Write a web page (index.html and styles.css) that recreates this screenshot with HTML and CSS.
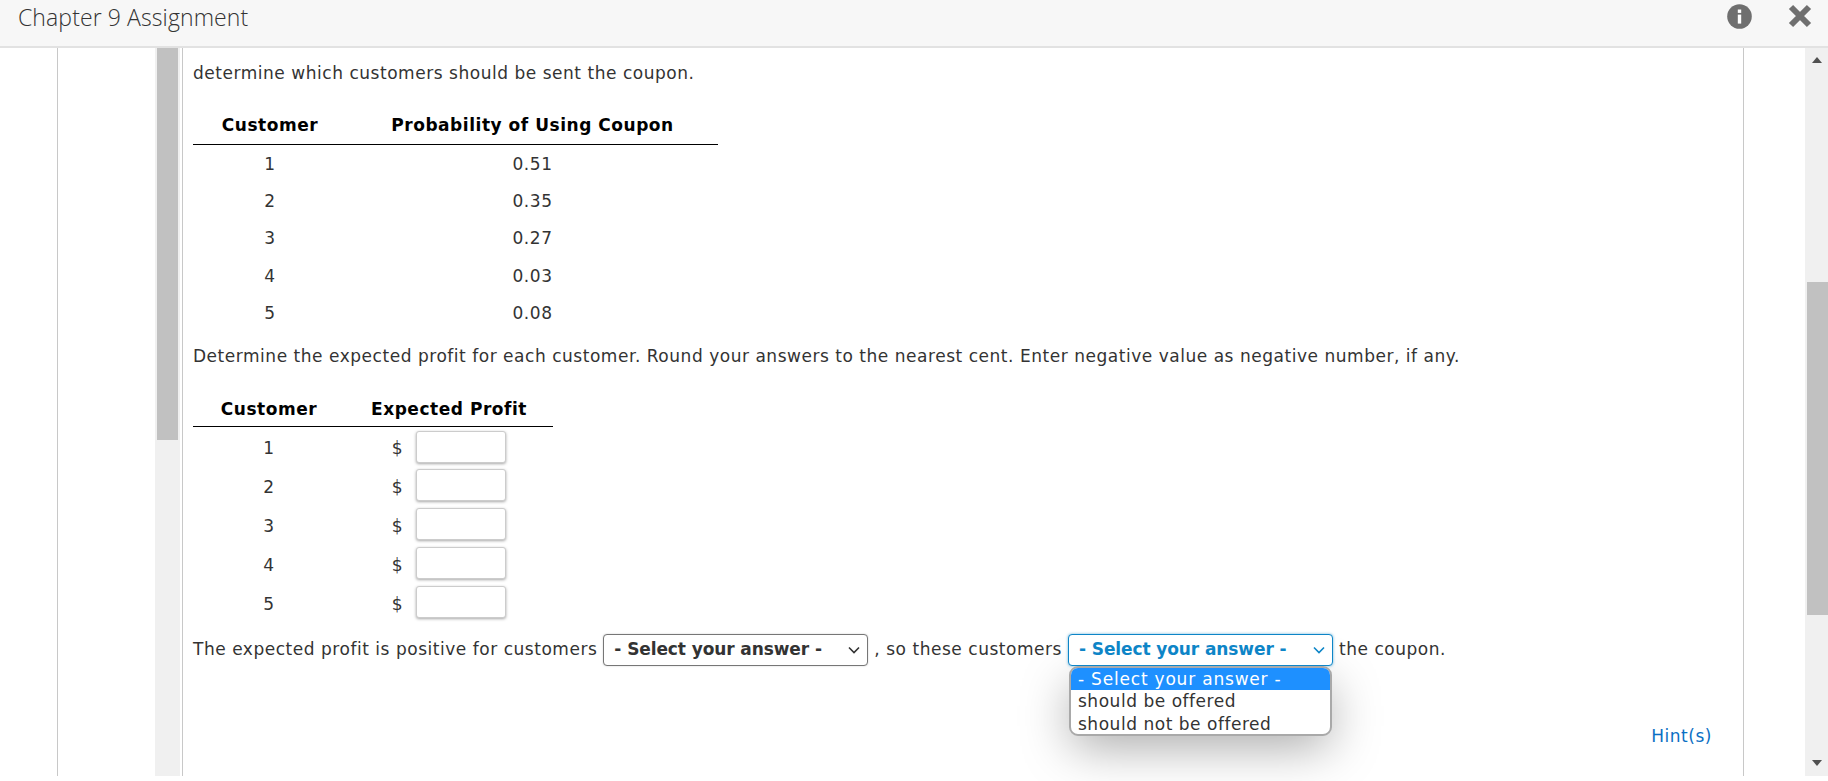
FILE: index.html
```html
<!DOCTYPE html>
<html lang="en">
<head>
    <meta charset="UTF-8">
    <meta name="viewport" content="width=device-width, initial-scale=1.0">
    <title>Chapter 9 Assignment</title>
    <link rel="stylesheet" href="styles.css">
</head>
<body>

    <div class="header">
        <div class="header-title">Chapter 9 Assignment</div>
        <div class="header-icons">
            <svg class="icon-info" width="25" height="25" viewBox="0 0 25 25">
                <circle cx="12.5" cy="12.5" r="12.3" fill="#6f6f6f"/>
                <rect x="10.8" y="5.5" width="3.4" height="3.4" fill="#fff"/>
                <rect x="10.8" y="10.6" width="3.4" height="9" fill="#fff"/>
            </svg>
            <svg class="icon-close" width="24" height="24" viewBox="0 0 24 24">
                <path d="M3 3l18 18M21 3L3 21" stroke="#6f6f6f" stroke-width="6"/>
            </svg>
        </div>
    </div>

    <div class="main">
        <div class="frame">
            <div class="side-col"></div>
            <div class="inner-track"><div class="inner-thumb"></div></div>
            <div class="content">
                <p class="intro">determine which customers should be sent the coupon.</p>

                <table class="data-table prob-table">
                    <thead>
                        <tr><th class="col-a">Customer</th><th class="col-b">Probability of Using Coupon</th></tr>
                    </thead>
                    <tbody>
                        <tr><td>1</td><td>0.51</td></tr>
                        <tr><td>2</td><td>0.35</td></tr>
                        <tr><td>3</td><td>0.27</td></tr>
                        <tr><td>4</td><td>0.03</td></tr>
                        <tr><td>5</td><td>0.08</td></tr>
                    </tbody>
                </table>

                <p class="instructions">Determine the expected profit for each customer. Round your answers to the nearest cent. Enter negative value as negative number, if any.</p>

                <table class="data-table profit-table">
                    <thead>
                        <tr><th class="col-c">Customer</th><th class="col-d">Expected Profit</th></tr>
                    </thead>
                    <tbody>
                        <tr><td class="row-num">1</td><td><span class="money"><span class="dollar">$</span> <input type="text" class="money-input"></span></td></tr>
                        <tr><td class="row-num">2</td><td><span class="money"><span class="dollar">$</span> <input type="text" class="money-input"></span></td></tr>
                        <tr><td class="row-num">3</td><td><span class="money"><span class="dollar">$</span> <input type="text" class="money-input"></span></td></tr>
                        <tr><td class="row-num">4</td><td><span class="money"><span class="dollar">$</span> <input type="text" class="money-input"></span></td></tr>
                        <tr><td class="row-num">5</td><td><span class="money"><span class="dollar">$</span> <input type="text" class="money-input"></span></td></tr>
                    </tbody>
                </table>

                <div class="answer-line">
                    <span>The expected profit is positive for customers</span>
                    <div class="fake-select">
                        <span>- Select your answer -</span>
                        <svg width="12" height="8" viewBox="0 0 12 8"><path d="M1 1.5l5 5 5-5" fill="none" stroke="#333" stroke-width="1.6"/></svg>
                    </div>
                    <span>, so these customers</span>
                    <div class="select-wrap">
                        <div class="fake-select open">
                            <span>- Select your answer -</span>
                            <svg width="12" height="8" viewBox="0 0 12 8"><path d="M1 1.5l5 5 5-5" fill="none" stroke="#0d85c7" stroke-width="1.6"/></svg>
                        </div>
                        <ul class="dropdown">
                            <li class="selected">- Select your answer -</li>
                            <li>should be offered</li>
                            <li>should not be offered</li>
                        </ul>
                    </div>
                    <span>the coupon.</span>
                </div>

                <div class="hint-row"><a class="hint" href="#">Hint(s)</a></div>
            </div>
        </div>
        <div class="scrollbar">
            <div class="arrow-up"></div>
            <div class="thumb"></div>
            <div class="arrow-down"></div>
        </div>
    </div>

</body>
</html>
```

FILE: styles.css
```css
* {
    box-sizing: border-box;
}

html, body {
    height: 781px;
    overflow: hidden;
}

body {
    margin: 0;
    background: #fff;
    color: #333;
    font-family: 'DejaVu Sans', Verdana, sans-serif;
    font-size: 17px;
    letter-spacing: 0.53px;
    line-height: 19px;
}

.header {
    height: 48px;
    background: #f7f7f7;
    border-bottom: 2px solid #e2e2e2;
    display: flex;
    justify-content: space-between;
    padding: 3px 16px 0 18px;
}

.header-title {
    font-family: 'Open Sans', sans-serif;
    font-size: 23px;
    font-weight: 300;
    letter-spacing: 0.1px;
    line-height: 28px;
    color: #333;
}

.header-icons {
    display: flex;
    gap: 36px;
    padding-top: 1px;
}

.main {
    display: flex;
    height: 728px;
}

.frame {
    flex: 1;
    display: flex;
}

.side-col {
    width: 98px;
    margin-left: 57px;
    border-left: 1px solid #c8c8c8;
}

.inner-track {
    width: 25px;
    background: #f0f0f0;
    padding: 0 2px;
    flex: none;
}

.inner-thumb {
    width: 21px;
    height: 392px;
    background: #c1c1c1;
}

.content {
    width: 1562px;
    flex: none;
    margin-left: 2px;
    padding: 0 16px 0 10px;
    border-left: 1px solid #c8c8c8;
    border-right: 1px solid #c8c8c8;
}

.intro {
    margin: 16px 0 0;
}

.data-table {
    border-collapse: collapse;
    text-align: center;
}

.data-table th {
    padding: 0;
    color: #000;
    border-bottom: 1px solid #000;
}

.data-table td {
    padding: 0;
}

.prob-table {
    margin-top: 24px;
}

.prob-table th {
    height: 37px;
    padding-top: 1px;
}

.prob-table td {
    height: 37.4px;
    padding-top: 3px;
}

.col-a { width: 154px; }
.col-b { width: 371px; }

.instructions {
    margin: 16px 0 0;
}

.profit-table {
    margin-top: 23px;
}

.profit-table th {
    height: 38px;
    padding-top: 4px;
}

.profit-table td {
    height: 39px;
}

.profit-table .row-num {
    padding-top: 4px;
}

.col-c { width: 152px; }
.col-d { width: 208px; }

.money {
    display: inline-flex;
    align-items: center;
    gap: 13px;
}

.dollar {
    padding-top: 4px;
}

.money-input {
    width: 90px;
    height: 32px;
    border: 1px solid #ccc;
    border-radius: 3px;
    box-shadow: 0 1px 3px rgba(0, 0, 0, 0.35);
    background: #fff;
}

.answer-line {
    display: flex;
    align-items: center;
    gap: 6px;
    margin-top: 12px;
    height: 32px;
}

.fake-select {
    width: 265px;
    height: 32px;
    display: flex;
    align-items: center;
    justify-content: space-between;
    padding: 0 7px 0 10px;
    border: 1px solid #767676;
    border-radius: 4px;
    background: #fff;
    font-weight: bold;
    letter-spacing: -0.1px;
    box-shadow: 0 0 2px rgba(0, 0, 0, 0.2);
}

.fake-select.open {
    color: #0d85c7;
    border-color: #0d85c7;
    box-shadow: 0 0 3px rgba(13, 133, 199, 0.6);
}

.select-wrap {
    position: relative;
}

.dropdown {
    position: absolute;
    top: 32px;
    left: 1px;
    width: 263px;
    height: 70px;
    margin: 0;
    padding: 0;
    list-style: none;
    background: #fff;
    border: 2px solid #a9a9a9;
    border-radius: 9px;
    overflow: hidden;
    line-height: 23px;
}

.select-wrap::after {
    content: "";
    position: absolute;
    top: 40px;
    left: 4px;
    width: 257px;
    height: 60px;
    z-index: -1;
    box-shadow: 0 12px 50px rgba(0, 0, 0, 0.35);
}

.dropdown li {
    padding-left: 7px;
    height: 23.5px;
    line-height: 23.5px;
}

.dropdown .selected {
    background: #1e90ff;
    color: #fff;
    height: 22px;
    line-height: 22px;
    letter-spacing: 0.8px;
}

.hint-row {
    text-align: right;
    margin-top: 61px;
    padding-right: 15px;
}

.hint {
    color: #0b6fc4;
    text-decoration: none;
}

.scrollbar {
    width: 23px;
    flex: none;
    background: #f0f0f0;
    position: relative;
}

.thumb {
    position: absolute;
    top: 234px;
    left: 2px;
    right: 0;
    height: 333px;
    background: #c1c1c1;
}

.arrow-up, .arrow-down {
    position: absolute;
    left: 7px;
    width: 0;
    height: 0;
    border-left: 5.5px solid transparent;
    border-right: 5.5px solid transparent;
}

.arrow-up {
    top: 9px;
    border-bottom: 6px solid #505050;
}

.arrow-down {
    bottom: 10px;
    border-top: 6px solid #505050;
}
```
